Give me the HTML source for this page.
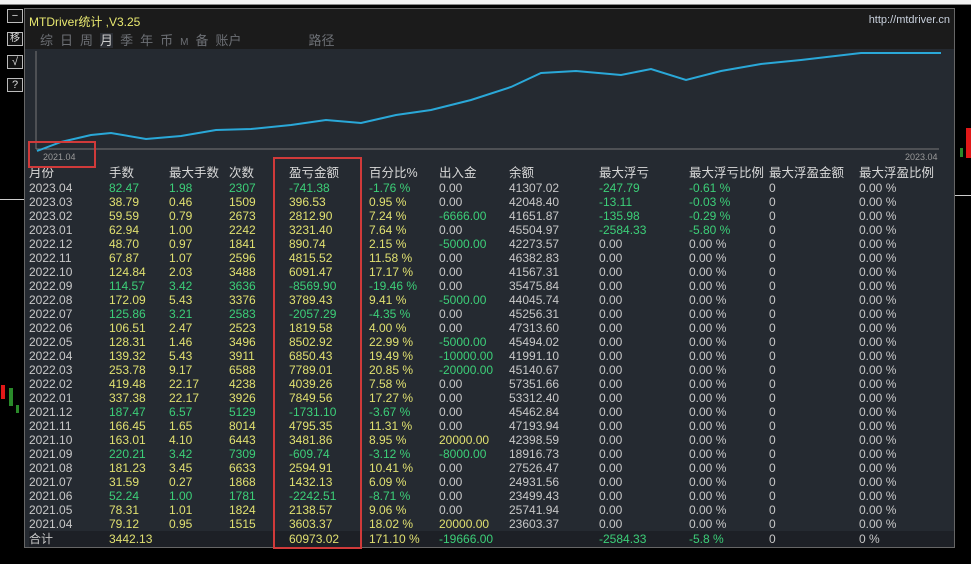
<!DOCTYPE html>
<html><head><meta charset="utf-8"><style>
*{margin:0;padding:0;box-sizing:border-box}
body{width:971px;height:564px;background:#000;position:relative;overflow:hidden;font-family:"Liberation Sans","Noto Sans CJK SC",sans-serif;}
.top{position:absolute;left:0;top:0;width:971px;height:5px;background:#f2f2f2;border-bottom:1px solid #888}
.btn{position:absolute;left:7px;width:16px;height:14px;border:1px solid #bbb;background:#111;color:#ddd;font-size:11px;line-height:12px;text-align:center}
.panel{position:absolute;left:24px;top:8px;width:931px;height:540px;background:#252a31;border:1px solid #666}
.hdr{position:absolute;left:0;top:0;width:929px;height:40px;background:#1b1b1b}
.title{position:absolute;left:4px;top:4px;color:#e8e870;font-size:12px}
.url{position:absolute;right:4px;top:5px;color:#c8d0dc;font-size:11px}
.tabs{position:absolute;left:15px;top:21px;color:#6c6f74;font-size:13px;white-space:nowrap}
.tabs span{margin-right:7px}
table{position:absolute;left:4px;top:156px;border-collapse:collapse;table-layout:fixed;font-size:12px;color:#c8c8c8}
td{height:13.95px;line-height:14px;padding:0;white-space:nowrap;overflow:hidden}
tr.h td{color:#d8d8d8;font-size:12.5px;height:16px}
.p td.c{color:#e0e070}.n td.c{color:#3ccf78}
.y{color:#e0e070!important}.g{color:#3ccf78!important}
tr.t td{background:#1d2026;height:16px}
.red{position:absolute;border:2px solid #d03a3a}
</style></head><body>
<div class="top"></div>
<div class="btn" style="top:9px">−</div>
<div class="btn" style="top:32px;font-size:10px">移</div>
<div class="btn" style="top:55px">√</div>
<div class="btn" style="top:78px">?</div>
<div style="position:absolute;left:0;top:199px;width:24px;height:1px;background:#ccc"></div>
<div style="position:absolute;left:955px;top:195px;width:16px;height:1px;background:#ccc"></div>
<div style="position:absolute;left:966px;top:128px;width:5px;height:30px;background:#e01818"></div>
<div style="position:absolute;left:960px;top:148px;width:3px;height:9px;background:#2a8a2a"></div>
<div style="position:absolute;left:1px;top:385px;width:4px;height:14px;background:#e01818"></div>
<div style="position:absolute;left:9px;top:388px;width:4px;height:18px;background:#2a8a2a"></div>
<div style="position:absolute;left:16px;top:405px;width:3px;height:8px;background:#2a8a2a"></div>
<div class="panel">
 <div class="hdr">
  <div class="title">MTDriver统计 ,V3.25</div>
  <div class="url">http://mtdriver.cn</div>
  <div class="tabs"><span>综</span><span>日</span><span>周</span><span style="color:#ccc;background:#2a2d33">月</span><span>季</span><span>年</span><span>币</span><span style="font-size:10px">M</span><span>备</span><span>账户</span><span style="margin-left:60px">路径</span></div>
 </div>
 <svg style="position:absolute;left:0;top:40px" width="929" height="115">
  <line x1="11" y1="2" x2="11" y2="100" stroke="#777" stroke-width="1"/>
  <line x1="11" y1="100" x2="914" y2="100" stroke="#777" stroke-width="1"/>
  <polyline fill="none" stroke="#2aa8d8" stroke-width="2" points="12,102 36,93 66,86 86,84 121,90 156,87 191,81 226,80 266,76 301,71 336,74 371,66 406,61 446,51 486,38 516,24 551,22 596,26 626,20 661,31 696,22 736,15 776,11 836,4 916,4"/>
  <text x="18" y="111" fill="#999" font-size="9" font-family="Liberation Sans">2021.04</text>
  <text x="880" y="111" fill="#999" font-size="9" font-family="Liberation Sans">2023.04</text>
 </svg>
 <table>
 <colgroup><col style="width:80px"><col style="width:60px"><col style="width:60px"><col style="width:60px"><col style="width:80px"><col style="width:70px"><col style="width:70px"><col style="width:90px"><col style="width:90px"><col style="width:80px"><col style="width:90px"><col style="width:95px"></colgroup>
 <tr class="h"><td>月份</td><td>手数</td><td>最大手数</td><td>次数</td><td>盈亏金额</td><td>百分比%</td><td>出入金</td><td>余额</td><td>最大浮亏</td><td>最大浮亏比例</td><td>最大浮盈金额</td><td>最大浮盈比例</td></tr>
 <tr class="n"><td>2023.04</td><td class="c">82.47</td><td class="c">1.98</td><td class="c">2307</td><td class="c">-741.38</td><td class="c">-1.76 %</td><td>0.00</td><td>41307.02</td><td class="g">-247.79</td><td class="g">-0.61 %</td><td>0</td><td>0.00 %</td></tr>
 <tr class="p"><td>2023.03</td><td class="c">38.79</td><td class="c">0.46</td><td class="c">1509</td><td class="c">396.53</td><td class="c">0.95 %</td><td>0.00</td><td>42048.40</td><td class="g">-13.11</td><td class="g">-0.03 %</td><td>0</td><td>0.00 %</td></tr>
 <tr class="p"><td>2023.02</td><td class="c">59.59</td><td class="c">0.79</td><td class="c">2673</td><td class="c">2812.90</td><td class="c">7.24 %</td><td class="g">-6666.00</td><td>41651.87</td><td class="g">-135.98</td><td class="g">-0.29 %</td><td>0</td><td>0.00 %</td></tr>
 <tr class="p"><td>2023.01</td><td class="c">62.94</td><td class="c">1.00</td><td class="c">2242</td><td class="c">3231.40</td><td class="c">7.64 %</td><td>0.00</td><td>45504.97</td><td class="g">-2584.33</td><td class="g">-5.80 %</td><td>0</td><td>0.00 %</td></tr>
 <tr class="p"><td>2022.12</td><td class="c">48.70</td><td class="c">0.97</td><td class="c">1841</td><td class="c">890.74</td><td class="c">2.15 %</td><td class="g">-5000.00</td><td>42273.57</td><td>0.00</td><td>0.00 %</td><td>0</td><td>0.00 %</td></tr>
 <tr class="p"><td>2022.11</td><td class="c">67.87</td><td class="c">1.07</td><td class="c">2596</td><td class="c">4815.52</td><td class="c">11.58 %</td><td>0.00</td><td>46382.83</td><td>0.00</td><td>0.00 %</td><td>0</td><td>0.00 %</td></tr>
 <tr class="p"><td>2022.10</td><td class="c">124.84</td><td class="c">2.03</td><td class="c">3488</td><td class="c">6091.47</td><td class="c">17.17 %</td><td>0.00</td><td>41567.31</td><td>0.00</td><td>0.00 %</td><td>0</td><td>0.00 %</td></tr>
 <tr class="n"><td>2022.09</td><td class="c">114.57</td><td class="c">3.42</td><td class="c">3636</td><td class="c">-8569.90</td><td class="c">-19.46 %</td><td>0.00</td><td>35475.84</td><td>0.00</td><td>0.00 %</td><td>0</td><td>0.00 %</td></tr>
 <tr class="p"><td>2022.08</td><td class="c">172.09</td><td class="c">5.43</td><td class="c">3376</td><td class="c">3789.43</td><td class="c">9.41 %</td><td class="g">-5000.00</td><td>44045.74</td><td>0.00</td><td>0.00 %</td><td>0</td><td>0.00 %</td></tr>
 <tr class="n"><td>2022.07</td><td class="c">125.86</td><td class="c">3.21</td><td class="c">2583</td><td class="c">-2057.29</td><td class="c">-4.35 %</td><td>0.00</td><td>45256.31</td><td>0.00</td><td>0.00 %</td><td>0</td><td>0.00 %</td></tr>
 <tr class="p"><td>2022.06</td><td class="c">106.51</td><td class="c">2.47</td><td class="c">2523</td><td class="c">1819.58</td><td class="c">4.00 %</td><td>0.00</td><td>47313.60</td><td>0.00</td><td>0.00 %</td><td>0</td><td>0.00 %</td></tr>
 <tr class="p"><td>2022.05</td><td class="c">128.31</td><td class="c">1.46</td><td class="c">3496</td><td class="c">8502.92</td><td class="c">22.99 %</td><td class="g">-5000.00</td><td>45494.02</td><td>0.00</td><td>0.00 %</td><td>0</td><td>0.00 %</td></tr>
 <tr class="p"><td>2022.04</td><td class="c">139.32</td><td class="c">5.43</td><td class="c">3911</td><td class="c">6850.43</td><td class="c">19.49 %</td><td class="g">-10000.00</td><td>41991.10</td><td>0.00</td><td>0.00 %</td><td>0</td><td>0.00 %</td></tr>
 <tr class="p"><td>2022.03</td><td class="c">253.78</td><td class="c">9.17</td><td class="c">6588</td><td class="c">7789.01</td><td class="c">20.85 %</td><td class="g">-20000.00</td><td>45140.67</td><td>0.00</td><td>0.00 %</td><td>0</td><td>0.00 %</td></tr>
 <tr class="p"><td>2022.02</td><td class="c">419.48</td><td class="c">22.17</td><td class="c">4238</td><td class="c">4039.26</td><td class="c">7.58 %</td><td>0.00</td><td>57351.66</td><td>0.00</td><td>0.00 %</td><td>0</td><td>0.00 %</td></tr>
 <tr class="p"><td>2022.01</td><td class="c">337.38</td><td class="c">22.17</td><td class="c">3926</td><td class="c">7849.56</td><td class="c">17.27 %</td><td>0.00</td><td>53312.40</td><td>0.00</td><td>0.00 %</td><td>0</td><td>0.00 %</td></tr>
 <tr class="n"><td>2021.12</td><td class="c">187.47</td><td class="c">6.57</td><td class="c">5129</td><td class="c">-1731.10</td><td class="c">-3.67 %</td><td>0.00</td><td>45462.84</td><td>0.00</td><td>0.00 %</td><td>0</td><td>0.00 %</td></tr>
 <tr class="p"><td>2021.11</td><td class="c">166.45</td><td class="c">1.65</td><td class="c">8014</td><td class="c">4795.35</td><td class="c">11.31 %</td><td>0.00</td><td>47193.94</td><td>0.00</td><td>0.00 %</td><td>0</td><td>0.00 %</td></tr>
 <tr class="p"><td>2021.10</td><td class="c">163.01</td><td class="c">4.10</td><td class="c">6443</td><td class="c">3481.86</td><td class="c">8.95 %</td><td class="y">20000.00</td><td>42398.59</td><td>0.00</td><td>0.00 %</td><td>0</td><td>0.00 %</td></tr>
 <tr class="n"><td>2021.09</td><td class="c">220.21</td><td class="c">3.42</td><td class="c">7309</td><td class="c">-609.74</td><td class="c">-3.12 %</td><td class="g">-8000.00</td><td>18916.73</td><td>0.00</td><td>0.00 %</td><td>0</td><td>0.00 %</td></tr>
 <tr class="p"><td>2021.08</td><td class="c">181.23</td><td class="c">3.45</td><td class="c">6633</td><td class="c">2594.91</td><td class="c">10.41 %</td><td>0.00</td><td>27526.47</td><td>0.00</td><td>0.00 %</td><td>0</td><td>0.00 %</td></tr>
 <tr class="p"><td>2021.07</td><td class="c">31.59</td><td class="c">0.27</td><td class="c">1868</td><td class="c">1432.13</td><td class="c">6.09 %</td><td>0.00</td><td>24931.56</td><td>0.00</td><td>0.00 %</td><td>0</td><td>0.00 %</td></tr>
 <tr class="n"><td>2021.06</td><td class="c">52.24</td><td class="c">1.00</td><td class="c">1781</td><td class="c">-2242.51</td><td class="c">-8.71 %</td><td>0.00</td><td>23499.43</td><td>0.00</td><td>0.00 %</td><td>0</td><td>0.00 %</td></tr>
 <tr class="p"><td>2021.05</td><td class="c">78.31</td><td class="c">1.01</td><td class="c">1824</td><td class="c">2138.57</td><td class="c">9.06 %</td><td>0.00</td><td>25741.94</td><td>0.00</td><td>0.00 %</td><td>0</td><td>0.00 %</td></tr>
 <tr class="p"><td>2021.04</td><td class="c">79.12</td><td class="c">0.95</td><td class="c">1515</td><td class="c">3603.37</td><td class="c">18.02 %</td><td class="y">20000.00</td><td>23603.37</td><td>0.00</td><td>0.00 %</td><td>0</td><td>0.00 %</td></tr>
 <tr class="t"><td>合计</td><td class="y">3442.13</td><td></td><td></td><td class="y">60973.02</td><td class="y">171.10 %</td><td class="g">-19666.00</td><td></td><td class="g">-2584.33</td><td class="g">-5.8 %</td><td>0</td><td>0 %</td></tr>
 </table>
</div>
<div class="red" style="left:28px;top:141px;width:68px;height:27px"></div>
<div class="red" style="left:273px;top:157px;width:89px;height:392px"></div>
</body></html>
